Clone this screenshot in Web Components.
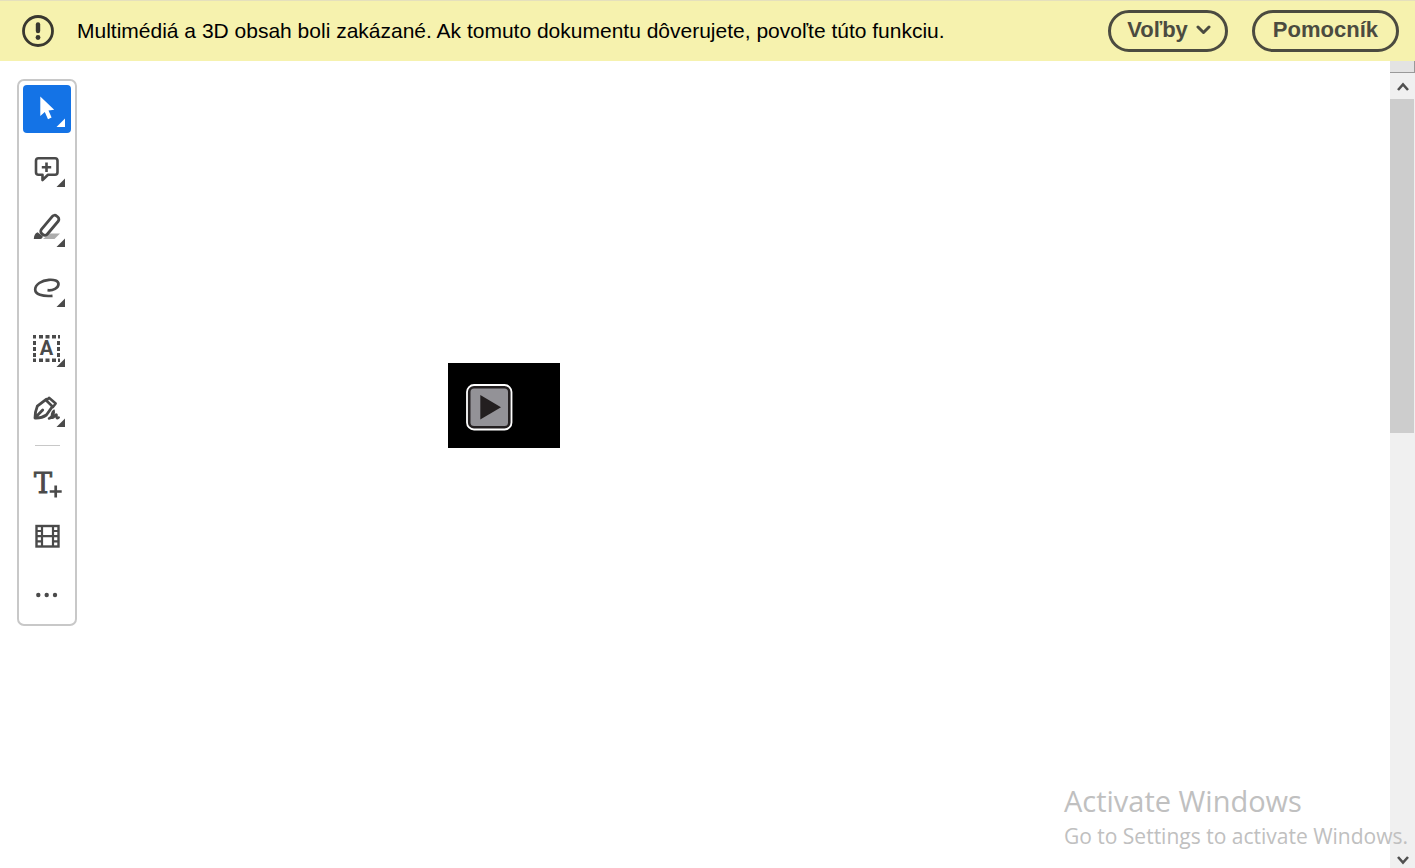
<!DOCTYPE html>
<html lang="sk">
<head>
<meta charset="utf-8">
<meta name="viewport" content="width=device-width, initial-scale=1">
<title>Dokument</title>
<style>
    body {
        margin: 0;
        background: #fff;
        font-family: "Liberation Sans", Arial, sans-serif;
    }
</style>
</head>
<body>
<viewer-app></viewer-app>

<script>
class PillButton extends HTMLElement {

    constructor() {
        super();
        this.attachShadow({mode: "open"}).innerHTML = `
        <style>
            :host {
                display: block;
            }

            button {
                display: flex;
                align-items: center;
                gap: 8px;
                box-sizing: border-box;
                height: 42px;
                padding: 0 18px 3px;
                border: 3px solid #4b4b40;
                border-radius: 21px;
                background: transparent;
                color: #4b4b40;
                font: bold 22px "Liberation Sans", Arial, sans-serif;
                white-space: nowrap;
            }

            svg {
                display: none;
            }

            :host([menu]) button {
                padding: 0 14px 3px 16px;
            }

            :host([menu]) svg {
                display: block;
            }
        </style>
        <button type="button">
            <slot></slot>
            <svg width="15" height="10" viewBox="0 0 15 10" fill="none" stroke="#4b4b40" stroke-width="3" stroke-linecap="round" stroke-linejoin="round" aria-hidden="true"><path d="M2 2l5.500 5.500L13 2"/></svg>
        </button>`;
        if (this.hasAttribute("menu")) {
            this.shadowRoot.querySelector("button").setAttribute("aria-haspopup", "menu");
        }
    }
}

class MessageBar extends HTMLElement {

    constructor() {
        super();
        this.attachShadow({mode: "open"}).innerHTML = `
        <style>
            :host {
                display: flex;
                align-items: center;
                box-sizing: border-box;
                height: 61px;
                padding: 0 16px 0 22px;
                border-top: 1px solid #e5e0bd;
                background: #f6f2ae;
                color: #000;
            }

            svg {
                flex: none;
            }

            p {
                flex: 1;
                margin: 0 23px;
                font-size: 21px;
                line-height: 24px;
            }

            .actions {
                display: flex;
                gap: 24px;
            }
        </style>
        <svg width="32" height="32" viewBox="0 0 32 32" aria-hidden="true">
            <circle cx="16" cy="16" r="14.500" fill="none" stroke="#39382f" stroke-width="2.800"/>
            <path d="M16 9.500v6.500" stroke="#39382f" stroke-width="4.400" stroke-linecap="round"/>
            <circle cx="16" cy="22.500" r="2.400" fill="#39382f"/>
        </svg>
        <p><slot></slot></p>
        <div class="actions"><slot name="action"></slot></div>`;
    }
}

const ICONS = {
    select: `<path d="M17.300 11.500v19.500l4.500-4 3.200 7.200 3.600-1.700-3.100-7 5.700-.7z" fill="currentColor"/>`,
    comment: `<path d="M15.500 13.200h16.500a2.500 2.500 0 0 1 2.500 2.500v11.500a2.500 2.500 0 0 1-2.500 2.500h-7l-5.500 5.300v-5.300h-4a2.500 2.500 0 0 1-2.500-2.500V15.700a2.500 2.500 0 0 1 2.500-2.500z" fill="none" stroke="currentColor" stroke-width="2.600" stroke-linejoin="round"/>
        <path d="M23.500 17.500v9.500M18.800 22.300h9.400" stroke="currentColor" stroke-width="2.600"/>`,
    highlight: `<path d="M26.500 28.500H37l-5.500 5.500H20z" fill="#adadad"/>
        <rect x="-11.500" y="-3.800" width="23" height="7.600" rx="3" transform="translate(26.800 20.300) rotate(-50)" fill="#fff" stroke="currentColor" stroke-width="2.800"/>
        <path d="M10.800 34c.2-3.500 1.200-5.700 3.700-6.700l5.300 4c-.3 1.700-1 2.700-2.500 2.700z" fill="currentColor"/>`,
    draw: `<path d="M24.500 25.200c5.500.6 11-2.200 11-6.200 0-3.200-4.500-4.600-9.500-4.200-7.500.6-13.800 4.700-13.800 9.700 0 4.800 7 7.200 17.300 6.300" fill="none" stroke="currentColor" stroke-width="2.700"/>`,
    text: `<path d="M10 11.700h27M10 35.300h27" stroke="currentColor" stroke-width="3.400" stroke-dasharray="3 3 4 2.500 4 2.500 4 2"/>
        <path d="M11.500 16v16.500M35.500 16v16.500" stroke="currentColor" stroke-width="3" stroke-dasharray="4 2"/>
        <text x="23.500" y="30" text-anchor="middle" font-family="Roboto, sans-serif" font-size="20" font-weight="700" fill="currentColor">A</text>`,
    sign: `<path d="M23.500 14.200l-9.200 7c-1.700 4-2.300 7.500-2.300 11.800 4.500.2 8.200-.7 11.400-3l6-8.500M12.300 32.500l7.400-7.500" fill="none" stroke="currentColor" stroke-width="2.800" stroke-linejoin="round" stroke-linecap="round"/>
        <path d="M26 12.800l6.700 5.700-2.700 3.500-6.700-6.500z" fill="none" stroke="currentColor" stroke-width="2.500" stroke-linejoin="round"/>
        <path d="M26 33.500c2.500-.6 5.500-5.500 4.700-7.500-1.500.9-2.200 5-1.500 6.800 1.500.7 3-3.300 4-3.300.9 0-.3 3.200.7 3.600.5.200 1.200-.2 1.800-.6" fill="none" stroke="currentColor" stroke-width="2.500" stroke-linecap="round"/>`,
    addText: `<text x="20" y="34" text-anchor="middle" font-family="DejaVu Serif, serif" font-size="27" fill="currentColor" stroke="currentColor" stroke-width=".9">T</text>
        <path d="M32.700 26.500v12M26.700 32.500h12" stroke="currentColor" stroke-width="2.700"/>`,
    media: `<rect x="13.500" y="11" width="22" height="20.500" fill="none" stroke="currentColor" stroke-width="2.400"/>
        <path d="M19 11v20.500M30 11v20.500M19 21.200H30M14 16h5.500M14 21.200h5.500M14 26.400h5.500M30 16h5.500M30 21.200h5.500M30 26.400h5.500" stroke="currentColor" stroke-width="2.200"/>`,
    more: `<circle cx="15.300" cy="24" r="2.200" fill="currentColor"/><circle cx="23.700" cy="24" r="2.200" fill="currentColor"/><circle cx="32" cy="24" r="2.200" fill="currentColor"/>`
};

class ToolButton extends HTMLElement {

    constructor() {
        super();
        const corner = this.hasAttribute("flyout") ? `<path d="M42 33.500v8.500h-8.500z" fill="currentColor"/>` : "";
        this.attachShadow({mode: "open"}).innerHTML = `
        <style>
            :host {
                display: block;
            }

            button {
                display: block;
                padding: 0;
                border: 0;
                border-radius: 4px;
                background: transparent;
                color: #4a4a4a;
            }

            :host([selected]) button {
                background: #1473e6;
                color: #fff;
            }

            svg {
                display: block;
            }
        </style>
        <button type="button" aria-label="${this.getAttribute("label")}">
            <svg width="48" height="48" viewBox="0 0 48 48" aria-hidden="true">${ICONS[this.getAttribute("icon")]}${corner}</svg>
        </button>`;
    }
}

class ToolPalette extends HTMLElement {

    constructor() {
        super();
        this.attachShadow({mode: "open"}).innerHTML = `
        <style>
            :host {
                display: block;
                padding: 4px 4px 5px;
                border: 2px solid #c8c8c8;
                border-radius: 7px;
                background: #fff;
            }

            .group {
                display: flex;
                flex-direction: column;
                gap: 12px;
            }

            .group.extra {
                gap: 8px;
            }

            hr {
                height: 1px;
                margin: 12px 11px 13px 12px;
                border: 0;
                background: #c8c8c8;
            }
        </style>
        <div class="group"><slot></slot></div>
        <hr>
        <div class="group extra"><slot name="extra"></slot></div>`;
    }
}

class MediaPoster extends HTMLElement {

    constructor() {
        super();
        this.attachShadow({mode: "open"}).innerHTML = `
        <style>
            :host {
                display: block;
                box-sizing: border-box;
                width: 112px;
                height: 85px;
                padding: 20px 17px;
                background: #000;
            }

            button {
                display: block;
                padding: 0;
                border: 0;
                background: transparent;
            }

            svg {
                display: block;
            }
        </style>
        <button type="button" aria-label="Prehrať">
            <svg width="48" height="48" viewBox="0 0 48 48" aria-hidden="true">
                <rect x="2" y="2" width="44.500" height="44.500" rx="7" fill="#231f20" stroke="#fff" stroke-width="1.800"/>
                <rect x="5.500" y="5.500" width="37.500" height="37.500" rx="3.500" fill="#939297"/>
                <path d="M15.300 12v24.500L36 24.200z" fill="#231f20"/>
            </svg>
        </button>`;
    }
}

class PageScrollbar extends HTMLElement {

    constructor() {
        super();
        this.attachShadow({mode: "open"}).innerHTML = `
        <style>
            :host {
                display: flex;
                flex-direction: column;
                width: 25px;
                background: #f0f0f0;
            }

            .splitter {
                box-sizing: border-box;
                height: 12px;
                border: solid #999;
                border-width: 0 1px 1px 0;
                background: #e3e3e3;
            }

            button {
                display: flex;
                justify-content: center;
                align-items: center;
                height: 26px;
                padding: 2px 0 0;
                border: 0;
                background: transparent;
            }

            button.down {
                height: 18px;
            }

            .track {
                display: flex;
                flex: 1;
                flex-direction: column;
            }

            .thumb {
                height: 44.5%;
                margin-right: 1px;
                background: #cdcdcd;
            }
        </style>
        <div class="splitter"></div>
        <button type="button" class="up" aria-label="Posunúť nahor">
            <svg width="12" height="10" viewBox="0 0 12 10" fill="none" stroke="#505050" stroke-width="2.600"><path d="M1 8l5-5.500L11 8"/></svg>
        </button>
        <div class="track"><div class="thumb"></div></div>
        <button type="button" class="down" aria-label="Posunúť nadol">
            <svg width="12" height="10" viewBox="0 0 12 10" fill="none" stroke="#505050" stroke-width="2.600"><path d="M1 2l5 5.500L11 2"/></svg>
        </button>`;
    }
}

class ActivationNotice extends HTMLElement {

    constructor() {
        super();
        this.attachShadow({mode: "open"}).innerHTML = `
        <style>
            :host {
                display: block;
                color: #c0c0c0;
                font-family: "Open Sans", "Noto Sans", sans-serif;
                font-size: 21px;
                line-height: 30px;
                white-space: nowrap;
                pointer-events: none;
            }

            .title {
                font-size: 29px;
                line-height: 40px;
            }
        </style>
        <div class="title"><slot name="title"></slot></div>
        <div><slot></slot></div>`;
    }
}

class ViewerApp extends HTMLElement {

    constructor() {
        super();
        this.attachShadow({mode: "open"}).innerHTML = `
        <style>
            :host {
                display: flex;
                flex-direction: column;
                position: relative;
                min-height: 100vh;
            }

            main {
                display: flex;
                flex: 1;
            }

            .document {
                display: flex;
                flex: 1;
                align-items: flex-start;
                padding: 18px 17px;
            }

            .page {
                flex: 1;
                padding: 284px 0 0 371px;
            }

            /* lies over the page and the scrollbar */
            activation-notice {
                position: absolute;
                right: 7px;
                bottom: 17px;
            }
        </style>
        <message-bar>
            Multimédiá a 3D obsah boli zakázané. Ak tomuto dokumentu dôverujete, povoľte túto funkciu.
            <pill-button slot="action" menu>Voľby</pill-button>
            <pill-button slot="action">Pomocník</pill-button>
        </message-bar>
        <main>
            <div class="document">
                <tool-palette>
                    <tool-button icon="select" label="Vybrať" flyout selected></tool-button>
                    <tool-button icon="comment" label="Pridať komentár" flyout></tool-button>
                    <tool-button icon="highlight" label="Zvýrazniť" flyout></tool-button>
                    <tool-button icon="draw" label="Kresliť" flyout></tool-button>
                    <tool-button icon="text" label="Vybrať text" flyout></tool-button>
                    <tool-button icon="sign" label="Podpísať" flyout></tool-button>
                    <tool-button slot="extra" icon="addText" label="Pridať text"></tool-button>
                    <tool-button slot="extra" icon="media" label="Pridať video"></tool-button>
                    <tool-button slot="extra" icon="more" label="Ďalšie nástroje"></tool-button>
                </tool-palette>
                <div class="page"><media-poster></media-poster></div>
            </div>
            <page-scrollbar></page-scrollbar>
        </main>
        <activation-notice>
            <span slot="title">Activate Windows</span>
            Go to Settings to activate Windows.
        </activation-notice>`;
    }
}

customElements.define("pill-button", PillButton);
customElements.define("message-bar", MessageBar);
customElements.define("tool-button", ToolButton);
customElements.define("tool-palette", ToolPalette);
customElements.define("media-poster", MediaPoster);
customElements.define("page-scrollbar", PageScrollbar);
customElements.define("activation-notice", ActivationNotice);
customElements.define("viewer-app", ViewerApp);
</script>
</body>
</html>
